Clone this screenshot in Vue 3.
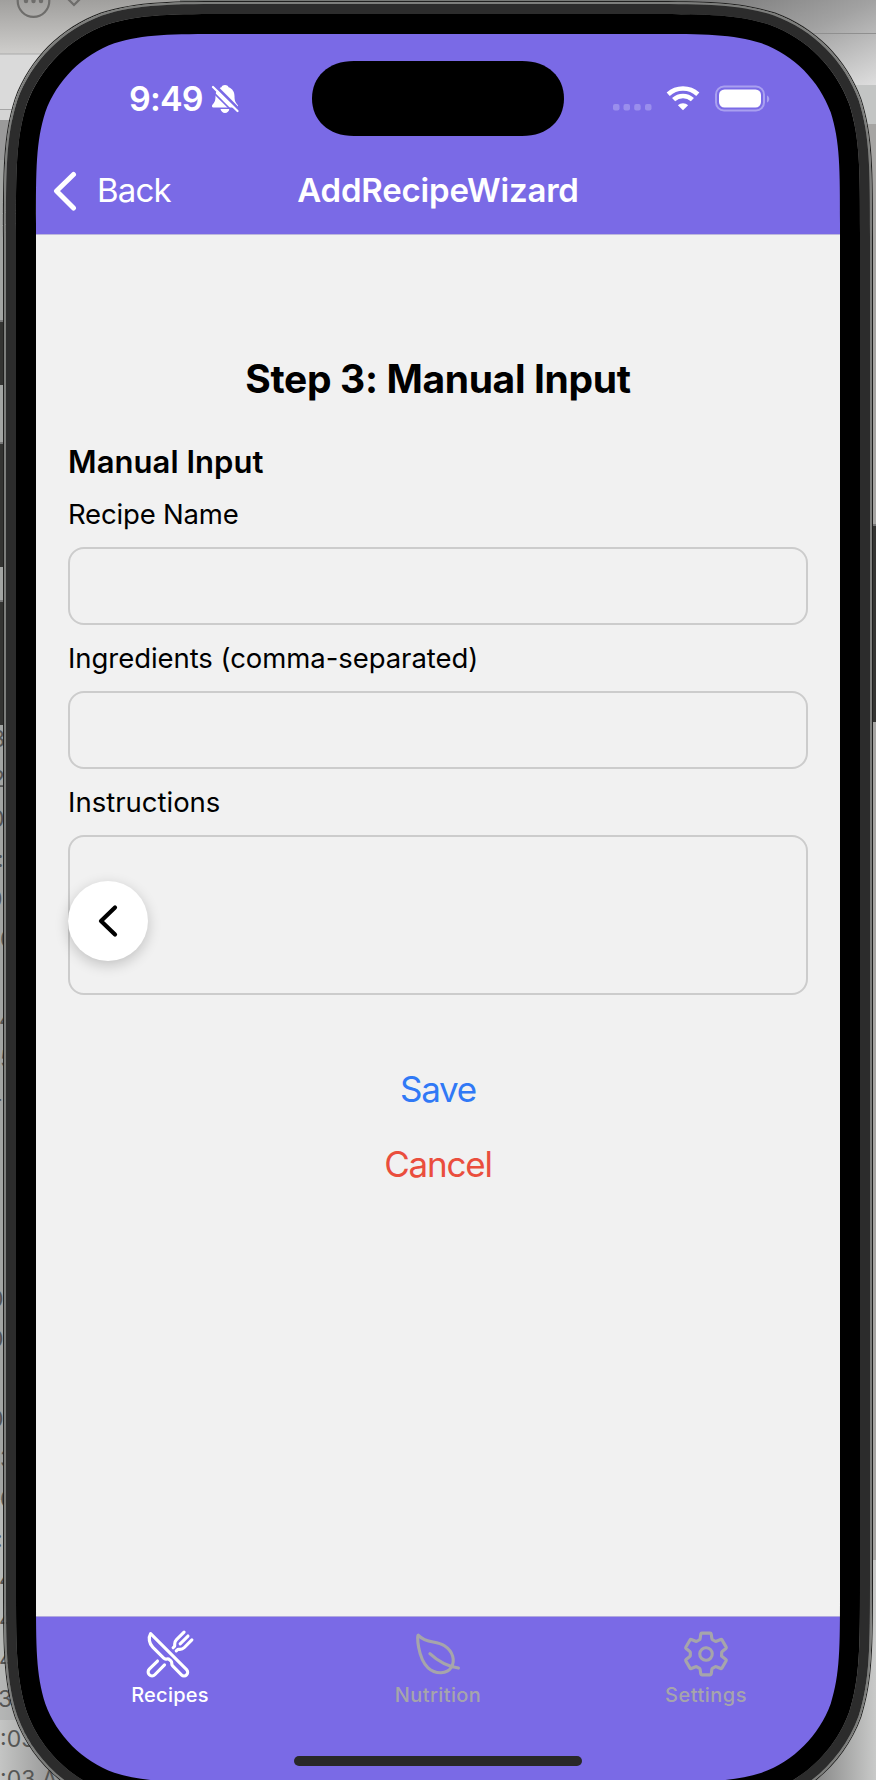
<script setup>
// Outline of a rectangle with continuous (squircle-like) corners
function smoothRect(x, y, w, h, r) {
  const a = 1.52866498 * r
  const b = 1.08849296 * r
  const c = 0.86840694 * r
  const d = 0.63149379 * r
  const e = 0.07491139 * r
  const f = 0.37282383 * r
  const g = 0.16905956 * r
  const R = x + w
  const B = y + h
  return [
    `M${x + a} ${y}H${R - a}`,
    `C${R - b} ${y} ${R - c} ${y} ${R - d} ${y + e}`,
    `C${R - f} ${y + g} ${R - g} ${y + f} ${R - e} ${y + d}`,
    `C${R} ${y + c} ${R} ${y + b} ${R} ${y + a}`,
    `V${B - a}`,
    `C${R} ${B - b} ${R} ${B - c} ${R - e} ${B - d}`,
    `C${R - g} ${B - f} ${R - f} ${B - g} ${R - d} ${B - e}`,
    `C${R - c} ${B} ${R - b} ${B} ${R - a} ${B}`,
    `H${x + a}`,
    `C${x + b} ${B} ${x + c} ${B} ${x + d} ${B - e}`,
    `C${x + f} ${B - g} ${x + g} ${B - f} ${x + e} ${B - d}`,
    `C${x} ${B - c} ${x} ${B - b} ${x} ${B - a}`,
    `V${y + a}`,
    `C${x} ${y + b} ${x} ${y + c} ${x + e} ${y + d}`,
    `C${x + g} ${y + f} ${x + f} ${y + g} ${x + d} ${y + e}`,
    `C${x + c} ${y} ${x + b} ${y} ${x + a} ${y}Z`
  ].join('')
}

const screen = smoothRect(36, 34, 804, 1748, 124)
const bezel = smoothRect(16, 14, 844, 1788, 143)
const body = smoothRect(6, 4, 864, 1808, 152)
const rim = smoothRect(4, 2, 868, 1812, 154)
const edge = smoothRect(3, 1, 870, 1814, 155)

// Timestamps of the window lying behind the device, with their left offset
const rows = [
  ['3', -9], ['2', -9], ['0', -10], [':', -3], ['0', -12], ['6', 0], ['', 0],
  ['4', -1], ['5', 0], ['-', -8], ['', 0], ['', 0], ['', 0], ['', 0],
  ['0', -11], ['0', -11], ['', 0], ['0', -11], ['3', 0], ['6', 0], [':', -4],
  ['4', -1], ['4', -1], ['4', -1], ['3', -2], [':03', 0], [':03 A', 0]
]

const fields = [
  { label: 'Recipe Name', cls: 'l-name' },
  { label: 'Ingredients (comma-separated)', cls: 'l-ingr' },
  { label: 'Instructions', cls: 'l-inst', tall: true }
]
</script>

<template>
  <div class="desktop">
    <svg class="layer" width="876" height="1780" viewBox="0 0 876 1780">
      <defs>
        <linearGradient id="topL" x1="0" y1="0" x2="0" y2="1">
          <stop offset="0" stop-color="#a09f9d" /><stop offset="1" stop-color="#cfcecc" />
        </linearGradient>
        <linearGradient id="topR" x1="0" y1="0" x2="1" y2="1">
          <stop offset="0" stop-color="#777" /><stop offset=".5" stop-color="#a2a2a2" /><stop offset="1" stop-color="#dedede" />
        </linearGradient>
        <linearGradient id="botL" x1="0" y1="0" x2="1" y2="0">
          <stop offset="0" stop-color="#c4c5c4" /><stop offset="1" stop-color="#777" />
        </linearGradient>
        <linearGradient id="botR" x1="0" y1="0" x2="1" y2="0">
          <stop offset="0" stop-color="#777" /><stop offset="1" stop-color="#c9cac9" />
        </linearGradient>
      </defs>
      <rect width="876" height="1780" fill="#a3a5a3" />
      <rect width="300" height="54" fill="url(#topL)" />
      <rect y="54" width="200" height="55" fill="#dadada" />
      <rect y="53.5" width="60" height="1" fill="#aaa" />
      <rect y="109" width="20" height="1" fill="#a5a5a5" />
      <rect y="110" width="20" height="10" fill="#d4d4d4" />
      <rect y="120" width="20" height="40" fill="#9a9a9a" />
      <rect x="180" width="520" height="6" fill="#777977" />
      <rect x="690" width="186" height="85" fill="url(#topR)" />
      <rect x="800" y="33" width="76" height="1" fill="#8f8f8f" />
      <rect x="830" y="85" width="46" height="39" fill="#c3c5c4" />
      <rect x="850" y="124" width="26" height="1436" fill="#a6a5a3" />
      <rect y="1500" width="6" height="180" fill="#b7b9b7" />
      <rect y="1680" width="90" height="100" fill="url(#botL)" />
      <rect y="1680" width="60" height="40" fill="#9ea09f" opacity=".4" />
      <rect x="800" y="1560" width="76" height="220" fill="url(#botR)" />
      <g fill="none" stroke="#6e6d6b" stroke-width="2.2">
        <circle cx="33.5" cy="1" r="15.8" /><path d="M67 -2 74 5 81 -2" />
      </g>
      <g fill="#6e6d6b"><circle cx="26" cy="1" r="2.2" /><circle cx="33.5" cy="1" r="2.2" /><circle cx="41" cy="1" r="2.2" /></g>
      <g fill="#343432">
        <rect y="321" width="6" height="64" /><rect y="443" width="6" height="124" /><rect y="601" width="6" height="124" />
        <rect x="871" y="525" width="5" height="197" />
      </g>
      <g fill="#777"><rect y="320" width="5" height="2" /><rect y="442" width="5" height="2" /><rect y="600" width="5" height="2" /><rect x="872" y="524" width="4" height="2" /></g>
    </svg>

    <div class="stamps">
      <span v-for="(row, i) in rows" :key="i" :style="{ marginLeft: row[1] + 'px' }">{{ row[0] }}</span>
    </div>

    <main class="phone">
      <header>
        <div class="status">
          <div class="clock">
            <span>9:49</span>
            <svg width="28" height="30" viewBox="0 0 28 30">
              <path d="M14 1c1.7 0 3 .9 3.6 2.3C21.5 4.7 23.5 8 23.5 12c0 5 1 6.500 3.200 9 .8.900.3 2.400-1 2.400H2.300c-1.300 0-1.800-1.500-1-2.400 2.200-2.500 3.200-4 3.200-9 0-4 2-7.300 5.900-8.700C11 1.900 12.300 1 14 1zM9.500 25h9c-.4 2.300-2.200 4-4.500 4s-4.100-1.700-4.500-4z" fill="#fff" />
              <path d="M3.500 1 28.500 26" stroke="#7a6ae6" stroke-width="3" />
              <path d="M2 3 26.500 27" stroke="#fff" stroke-width="2.2" stroke-linecap="round" />
              <path d="M-1 5 22 28" stroke="#7a6ae6" stroke-width="1.6" />
            </svg>
          </div>
          <svg class="island" width="252" height="75" viewBox="0 0 252 75">
            <path d="M42 0H210C236 0 252 16 252 37.500S236 75 210 75H42C16 75 0 59 0 37.500S16 0 42 0Z" fill="#000" />
          </svg>
          <svg class="signals" width="158" height="30" viewBox="0 0 158 30">
            <g fill="#9a8eed">
              <rect x="1" y="20" width="6.5" height="6.5" rx="2" /><rect x="11.5" y="20" width="6.5" height="6.5" rx="2" />
              <rect x="22.2" y="20" width="6.5" height="6.5" rx="2" /><rect x="33" y="20" width="6.5" height="6.5" rx="2" />
            </g>
            <g fill="none" stroke="#fff" stroke-width="4.6">
              <path d="M56.200 10.200C64.500 2.500 77.500 2.500 85.800 10.200" /><path d="M61.600 15.600C67 10.700 75 10.700 80.400 15.600" />
            </g>
            <path d="M71 26.300 65.900 21.300C68.500 18.500 73.500 18.500 76.100 21.300Z" fill="#fff" />
            <rect x="104" y="2.5" width="48" height="24" rx="8" fill="none" stroke="#a9a0f0" stroke-width="2" />
            <rect x="107" y="5.5" width="42" height="18" rx="5.5" fill="#fff" />
            <path d="M155 11.500c3 1.200 3 5.800 0 7z" fill="#a9a0f0" />
          </svg>
        </div>
        <nav>
          <a class="back">
            <svg width="26" height="40" viewBox="0 0 26 40"><path d="M20.500 3.500 3.500 20 20.500 37" fill="none" stroke="#fff" stroke-width="5" stroke-linecap="round" stroke-linejoin="round" /></svg>
            <span>Back</span>
          </a>
          <h1>AddRecipeWizard</h1>
          <i></i>
        </nav>
      </header>

      <section class="form">
        <h2>Step 3: Manual Input</h2>
        <h3>Manual Input</h3>
        <div v-for="f in fields" :key="f.label" class="field">
          <label><span :class="f.cls">{{ f.label }}</span></label>
          <div class="box" :class="{ tall: f.tall }">
            <button v-if="f.tall" class="prev">
              <svg width="24" height="36" viewBox="0 0 24 36"><path d="M19 4.500 5 18 19 31.500" fill="none" stroke="#000" stroke-width="4.2" stroke-linecap="round" stroke-linejoin="round" /></svg>
            </button>
          </div>
        </div>
        <a class="action save">Save</a>
        <a class="action cancel">Cancel</a>
      </section>

      <footer>
        <div class="tabs">
          <div class="tab active">
            <svg viewBox="0 0 512 512" stroke-width="32">
              <path d="M57.490 47.740l368.430 368.430a37.280 37.280 0 010 52.720 37.290 37.290 0 01-52.720 0l-90-91.550a32 32 0 01-9.200-22.430v-5.530a32 32 0 00-9.520-22.780l-11.930-11.530a32 32 0 00-29.800-8.150 31.930 31.930 0 01-31-8.220L81.130 188.170c-39.380-39.380-49.120-98.200-23.640-140.430z" />
              <path d="M400 32l-77.250 77.250A64 64 0 00304 154.510v14.860a16 16 0 01-4.690 11.320L288 192M320 224l11.310-11.310a16 16 0 0111.320-4.690h14.860a64 64 0 0045.260-18.750L480 112M440 72l-80 80M200 368l-99.720 100.280a40 40 0 01-56.560 0 40 40 0 010-56.560L128 328" />
            </svg>
            <span class="t1">Recipes</span>
          </div>
          <div class="tab">
            <svg viewBox="0 0 512 512" stroke-width="32">
              <path d="M321.890 171.420C233 114 141 155.220 56 65.220c-19.800-21-8.300 235.500 98.100 332.700 77.790 71 197.900 63.080 238.400-5.920s18.280-163.170-70.610-220.580zM173 253c86 81 175 129 292 147" />
            </svg>
            <span class="t2">Nutrition</span>
          </div>
          <div class="tab">
            <svg viewBox="0 0 512 512" stroke-width="32">
              <path d="M262.290 192.310a64 64 0 1057.400 57.400 64.130 64.130 0 00-57.400-57.400zM416.390 256a154.340 154.340 0 01-1.530 20.790l45.210 35.460a10.810 10.810 0 012.450 13.750l-42.770 74a10.810 10.810 0 01-13.140 4.590l-44.900-18.080a16.110 16.110 0 00-15.170 1.750A164.480 164.480 0 01325 400.800a15.940 15.940 0 00-8.820 12.140l-6.730 47.890a11.080 11.080 0 01-10.680 9.170h-85.540a11.110 11.110 0 01-10.690-8.870l-6.720-47.820a16.070 16.070 0 00-9-12.220 155.300 155.300 0 01-21.460-12.570 16 16 0 00-15.110-1.710l-44.890 18.070a10.810 10.810 0 01-13.140-4.580l-42.770-74a10.800 10.800 0 012.450-13.750l38.210-30a16.050 16.050 0 006-14.080c-.36-4.170-.58-8.330-.58-12.500s.21-8.270.58-12.350a16 16 0 00-6.070-13.940l-38.190-30A10.810 10.810 0 0149.480 186l42.770-74a10.810 10.810 0 0113.140-4.590l44.900 18.080a16.110 16.110 0 0015.170-1.750A164.480 164.480 0 01187 111.200a15.940 15.940 0 008.820-12.140l6.730-47.890A11.080 11.080 0 01213.230 42h85.540a11.110 11.110 0 0110.690 8.870l6.720 47.820a16.070 16.070 0 009 12.220 155.300 155.300 0 0121.460 12.570 16 16 0 0015.110 1.710l44.890-18.070a10.810 10.810 0 0113.140 4.580l42.770 74a10.800 10.800 0 01-2.450 13.750l-38.210 30a16.050 16.050 0 00-6.050 14.080c.33 4.140.55 8.300.55 12.470z" />
            </svg>
            <span class="t3">Settings</span>
          </div>
        </div>
        <div class="home"></div>
      </footer>
    </main>

    <svg class="layer frame" width="876" height="1780" viewBox="0 0 876 1780" fill-rule="evenodd">
      <path :d="edge + rim" fill="#20201f" />
      <path :d="rim + body" fill="#7d7e7c" />
      <path :d="body + bezel" fill="#2c2c2c" />
      <path :d="bezel + screen" fill="#000" />
    </svg>
  </div>
</template>

<style>
body { margin: 0; }
</style>

<style scoped>
.desktop {
  position: relative;
  width: 876px;
  height: 1780px;
  overflow: hidden;
  display: flow-root;
  font-family: Inter, "Liberation Sans", sans-serif;
  color: #000;
}
.layer { position: absolute; inset: 0; display: block; }
.frame { pointer-events: none; }
.stamps {
  position: absolute;
  left: 0;
  top: 719px;
  width: 70px;
  overflow: hidden;
  display: flex;
  flex-direction: column;
  font-size: 23px;
  color: #555655;
}
.stamps span { height: 40px; line-height: 40px; white-space: nowrap; }
.phone {
  position: relative;
  width: 804px;
  height: 1748px;
  margin: 34px 36px 0;
  display: flex;
  flex-direction: column;
  background: #f1f1f1;
  border-radius: 110px;
  overflow: hidden;
}
header { height: 201px; background: #7a6ae6; border-bottom: 1px solid #bdb8dc; box-sizing: border-box; }
.status {
  height: 75px;
  padding-top: 27px;
  display: grid;
  grid-template-columns: 276px 252px 276px;
}
.clock {
  display: flex;
  align-items: center;
  padding-left: 93px;
  gap: 8px;
  color: #fff;
  font-size: 34px;
  font-weight: 600;
  line-height: 40px;
  height: 76px;
  letter-spacing: -0.8px;
}
.signals { margin: 23px 0 0 47.5px; }
nav {
  margin-top: 28px;
  height: 52px;
  display: grid;
  grid-template-columns: 240px 1fr 240px;
  align-items: center;
  color: #fff;
  font-size: 34px;
  line-height: 52px;
}
.back { display: flex; align-items: center; padding-left: 17px; gap: 18px; }
.back svg { margin-top: 2px; }
.back span { letter-spacing: -0.8px; font-size: 33px; }
h1 { margin: 0; font-size: 33px; font-weight: 600; text-align: center; letter-spacing: -0.2px; white-space: nowrap; }
.form { flex: 1; padding: 120px 32px 0; display: flex; flex-direction: column; }
h2 { margin: 0; height: 48px; line-height: 48px; font-size: 39px; font-weight: 700; text-align: center; letter-spacing: -0.35px; }
h3 { margin: 39px 0 0; height: 40px; line-height: 40px; font-size: 31px; font-weight: 600; letter-spacing: 0.05px; }
.field { display: flex; flex-direction: column; margin-bottom: 16px; }
label { height: 34px; line-height: 34px; font-size: 27.5px; margin-bottom: 16px; }
.l-name { letter-spacing: -0.18px; }
.l-ingr { letter-spacing: -0.06px; }
.field:nth-of-type(1) { margin-top: 15px; }
.box { height: 78px; box-sizing: border-box; border: 2px solid #ccc; border-radius: 16px; }
.tall { height: 160px; position: relative; }
.prev {
  position: absolute;
  left: -2px;
  top: 44px;
  width: 80px;
  height: 80px;
  padding: 0;
  border: 0;
  border-radius: 50%;
  background: #fff;
  box-shadow: 0 4px 14px rgba(0, 0, 0, 0.2);
  display: flex;
  align-items: center;
  justify-content: center;
}
.action { height: 44px; line-height: 44px; font-size: 35px; letter-spacing: -1.2px; text-align: center; }
.save { margin-top: 56px; color: #3079f6; }
.cancel { margin-top: 31px; color: #ea4e3d; }
footer {
  height: 166px;
  box-sizing: border-box;
  background: #7a6ae6;
  border-top: 1px solid #b1a9de;
  display: flex;
  flex-direction: column;
}
.tabs { display: grid; grid-template-columns: repeat(3, 1fr); height: 124px; padding-top: 12px; box-sizing: border-box; }
.tab { display: flex; flex-direction: column; align-items: center; color: #a6a5ab; font-size: 20px; font-weight: 500; line-height: 24px; }
.active { color: #fff; }
.tab svg { width: 50px; height: 50px; fill: none; stroke: currentColor; stroke-linecap: round; stroke-linejoin: round; margin-bottom: 4px; }
.t1 { letter-spacing: 0.25px; }
.t2 { letter-spacing: 0.4px; }
.t3 { letter-spacing: 0.5px; }
.home { width: 288px; height: 10px; margin: 15px auto 0; border-radius: 5px; background: #282828; }
</style>
